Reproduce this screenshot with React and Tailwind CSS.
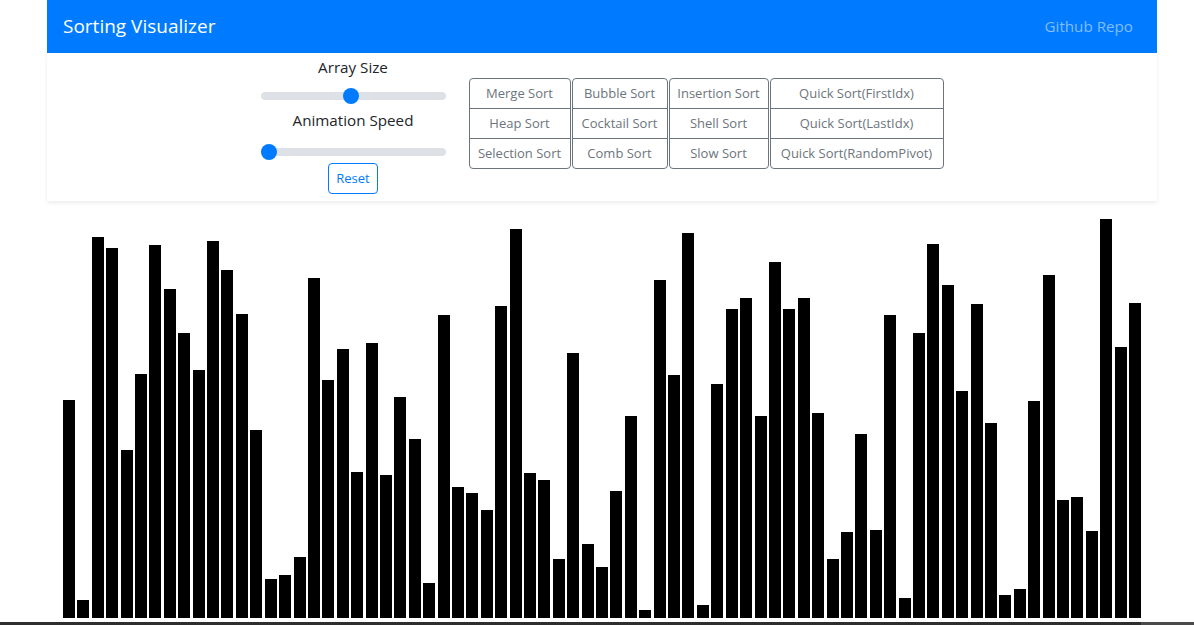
import { useState } from "react";

const TOPS = [
    400, 600, 237, 248, 450, 374, 245, 289, 333, 370,
    241, 270, 314, 430, 579, 575, 557, 278, 380, 349,
    472, 343, 475, 397, 439, 583, 315, 487, 493, 510,
    306, 229, 473, 480, 559, 353, 544, 567, 491, 416,
    610, 280, 375, 233, 605, 384, 309, 298, 416, 262,
    309, 298, 413, 559, 532, 434, 530, 315, 598, 333,
    244, 285, 391, 304, 423, 595, 589, 401, 275, 500,
    497, 531, 219, 347, 303,
];

const SORT_COLUMNS = [
    { width: "w-[102px]", items: ["Merge Sort", "Heap Sort", "Selection Sort"] },
    { width: "w-[96px]", items: ["Bubble Sort", "Cocktail Sort", "Comb Sort"] },
    { width: "w-[100px]", items: ["Insertion Sort", "Shell Sort", "Slow Sort"] },
    { width: "w-[174px]", items: ["Quick Sort(FirstIdx)", "Quick Sort(LastIdx)", "Quick Sort(RandomPivot)"] },
];

const Slider = ({ thumbClass }) => (
    <div className="relative flex h-[22px] w-[185px] items-center">
        <div className="h-2 w-full rounded-full bg-[#dee2e6]" />
        <div className={`absolute top-[3px] h-4 w-4 rounded-full bg-[#007bff] ${thumbClass}`} />
    </div>
);

const App = () => {
    const [array] = useState(TOPS.map((top) => 618 - top));

    return (
        <div className="min-h-[625px] bg-white font-['Segoe_UI','Open_Sans',sans-serif] text-[#212529]">
            <div className="ml-[47px] w-[1110px]">
                <nav className="flex h-[53px] items-center justify-between bg-[#007bff] px-4">
                    <span className="text-[19px] text-white">Sorting Visualizer</span>
                    <a className="mr-[8px] text-[15.2px] text-[#80bdff]">Github Repo</a>
                </nav>

                <div className="flex h-[148px] justify-center gap-[23px] bg-white pt-[2px] shadow-[0_2px_4px_rgba(0,0,0,0.08)]">
                    <div className="flex w-[185px] flex-col items-center">
                        <div className="h-6 text-[15.2px] leading-6">Array Size</div>
                        <div className="mt-[6px]">
                            <Slider thumbClass="left-[82px]" />
                        </div>
                        <div className="mt-px h-6 text-[15.2px] leading-6">Animation Speed</div>
                        <div className="mt-[9px]">
                            <Slider thumbClass="left-0" />
                        </div>
                        <button className="h-[31px] w-[50px] rounded border border-[#007bff] text-[13px] text-[#007bff]">
                            Reset
                        </button>
                    </div>

                    <div className="mt-[23px] flex gap-px self-start">
                        {SORT_COLUMNS.map((col) => (
                            <div key={col.items[0]} className={`flex flex-col ${col.width}`}>
                                {col.items.map((name, i) => (
                                    <button
                                        key={name}
                                        className={`h-[31px] w-full whitespace-nowrap border border-[#6c757d] text-[13px] text-[#6c757d] ${
                                            i === 0 ? "rounded-t" : "-mt-px"
                                        } ${i === col.items.length - 1 ? "rounded-b" : ""}`}
                                    >
                                        {name}
                                    </button>
                                ))}
                            </div>
                        ))}
                    </div>
                </div>
            </div>

            <div className="ml-[63px] flex h-[417px] w-[1078px] items-end gap-[2.4px]">
                {array.map((h, idx) => (
                    <div key={idx} className="flex-1 bg-black" style={{ height: `${h}px` }} />
                ))}
            </div>

            <div className="mt-[4px] flex h-[3px]">
                <div className="w-[1141px] bg-[#2e2e2e]" />
                <div className="flex-1 bg-[#4a4a4a]" />
            </div>
        </div>
    );
};

export default App;
